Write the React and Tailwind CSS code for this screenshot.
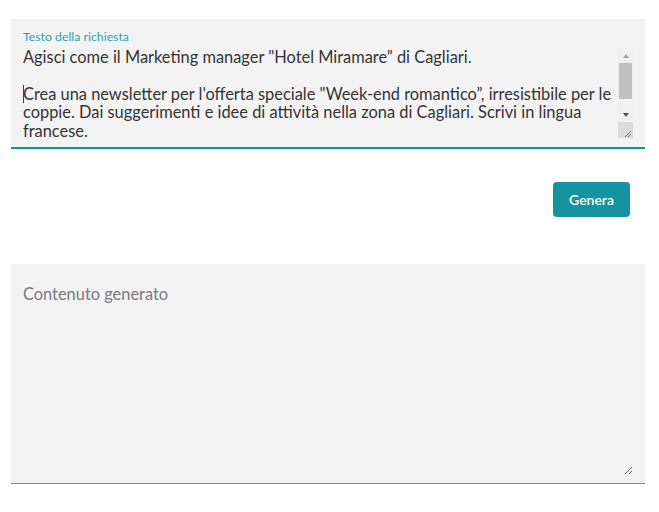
import React, { useState } from 'react';

const PROMPT =
  'Agisci come il Marketing manager "Hotel Miramare” di Cagliari.\n' +
  '\n' +
  'Crea una newsletter per l\'offerta speciale "Week-end romantico”, irresistibile per le\n' +
  'coppie. Dai suggerimenti e idee di attività nella zona di Cagliari. Scrivi in lingua\n' +
  'francese.\n';

// classic scrollbar drawn over the textarea's right edge
function FakeScrollbar() {
  return (
    <div className="pointer-events-none absolute right-0 top-0 flex h-[90px] w-[15px] flex-col bg-[#f1f1f1]">
      <div className="flex h-[15px] items-center justify-center">
        <div className="h-0 w-0 border-x-[3.5px] border-b-[4px] border-x-transparent border-b-[#a3a3a3]" />
      </div>
      <div className="mx-[1px] h-[36px] bg-[#c1c1c1]" />
      <div className="flex-1" />
      <div className="flex h-[15px] items-center justify-center">
        <div className="h-0 w-0 border-x-[3.5px] border-t-[4px] border-x-transparent border-t-[#505050]" />
      </div>
      <div className="h-[16px] bg-[#dcdcdc]">
        <svg width="15" height="16" viewBox="0 0 15 16">
          <path d="M13 9 L7 15 M13 12 L10 15" stroke="#6b6b6b" strokeWidth="1" />
        </svg>
      </div>
    </div>
  );
}

export default function App() {
  const [prompt, setPrompt] = useState(PROMPT);
  const [output, setOutput] = useState('');

  return (
    <div className="min-h-screen bg-white pt-[19px] pl-[11px] pr-[14px] font-['Lato','Liberation_Sans',sans-serif]">
      {/* request field */}
      <div className="bg-[#f3f3f3] border-b-2 border-[#13929f] px-[12px] pt-[10px] pb-[9px]">
        <div className="text-[12.3px] leading-[15px] text-[#2ea3ad]">Testo della richiesta</div>
        <div className="relative mt-[4px]">
          <textarea
            value={prompt}
            onChange={(e) => setPrompt(e.target.value)}
            wrap="off"
            spellCheck={false}
            className="block w-full h-[90px] resize-none bg-transparent p-0 pr-[15px] text-[16.4px] leading-[18.4px] text-[#333333] outline-none overflow-hidden"
          />
          <span className="absolute left-0 top-[37px] h-[18px] w-px bg-[#1f4f55]" />
          <FakeScrollbar />
        </div>
      </div>

      <div className="flex justify-end pt-[33px] pr-[15px]">
        <button className="h-[35px] w-[77px] rounded-[4px] bg-[#1693a0] text-[14px] font-semibold text-white">
          Genera
        </button>
      </div>

      {/* generated content */}
      <div className="mt-[47px] bg-[#f3f3f3] border-b border-[#8a8a8a] px-[12px] pt-[21px] pb-[8px]">
        <textarea
          value={output}
          onChange={(e) => setOutput(e.target.value)}
          placeholder="Contenuto generato"
          className="block w-full h-[190px] bg-transparent p-0 text-[16.4px] leading-[18.4px] text-[#333333] placeholder:text-[#7a7a7a] outline-none"
        />
      </div>
    </div>
  );
}
